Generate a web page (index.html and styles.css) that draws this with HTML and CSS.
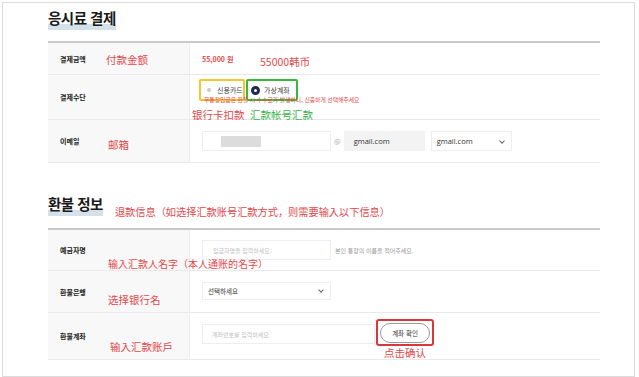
FILE: index.html
```html
<!DOCTYPE html>
<html lang="ko">
<head>
<meta charset="utf-8">
<title>응시료 결제</title>
<link rel="stylesheet" href="styles.css">
</head>
<body>
<div class="frame">
  <div class="title-line t1">
    <h2 class="title"><span class="hl">응시료 결제</span></h2>
  </div>
  <div class="table">
    <div class="row r1">
      <div class="th">결제금액</div>
      <div class="td"><span class="price">55,000 원</span></div>
      <span class="note n-amount">付款金额</span>
      <span class="note n-won">55000韩币</span>
    </div>
    <div class="row r2">
      <div class="th">결제수단</div>
      <div class="td td-pay">
        <div class="opts">
          <span class="opt opt-card"><span class="dot"></span>신용카드</span>
          <span class="opt opt-vbank"><span class="radio"></span>가상계좌</span>
        </div>
        <p class="warn">무통장입금은 환불 시 수수료가 발생하니, 신중하게 선택해주세요</p>
      </div>
      <span class="note n-card">银行卡扣款</span>
      <span class="note green n-vbank">汇款帐号汇款</span>
    </div>
    <div class="row r3">
      <div class="th">이메일</div>
      <div class="td">
        <span class="input in-mail"><span class="blur"></span></span>
        <span class="at">@</span>
        <span class="input in-domain">gmail.com</span>
        <span class="input select sel-domain">gmail.com<span class="chev"></span></span>
      </div>
      <span class="note n-mail">邮箱</span>
    </div>
  </div>

  <div class="title-line t2">
    <h2 class="title"><span class="hl">환불 정보</span></h2>
    <span class="note inline">退款信息（如选择汇款账号汇款方式，则需要输入以下信息）</span>
  </div>
  <div class="table">
    <div class="row s1">
      <div class="th">예금자명</div>
      <div class="td">
        <span class="input in-name ph">입금자명을 입력하세요.</span>
        <span class="help">본인 통장의 이름을 적어주세요.</span>
      </div>
      <span class="note n-name">输入汇款人名字（本人通账的名字）</span>
    </div>
    <div class="row s2">
      <div class="th">환불은행</div>
      <div class="td">
        <span class="input select sel-bank">선택하세요<span class="chev"></span></span>
      </div>
      <span class="note n-bank">选择银行名</span>
    </div>
    <div class="row s3">
      <div class="th">환불계좌</div>
      <div class="td td-acc">
        <span class="input in-acc ph">계좌번호를 입력하세요.</span>
        <div class="confirm">
          <span class="mark"><button class="btn" type="button">계좌 확인</button></span>
          <span class="note static">点击确认</span>
        </div>
      </div>
      <span class="note n-acc">输入汇款账户</span>
    </div>
  </div>
</div>
</body>
</html>
```
FILE: styles.css
```css
html, body {
  margin: 0;
  padding: 0;
  background: #fff;
  overflow: hidden;
}
body {
  font-family: "Noto Sans CJK KR", "Noto Sans", sans-serif;
  color: #222;
}
.frame {
  box-sizing: border-box;
  margin: 2px 4px 0 2px;
  height: 375px;
  border: 1px solid #dcdcdc;
  padding: 5px 0 0 45px;
}
.title-line {
  display: flex;
  align-items: flex-end;
  gap: 12px;
  height: 22px;
}
.t2 {
  margin-top: 31px;
}
.title {
  margin: 0;
  font-size: 14.5px;
  line-height: 20px;
  font-weight: 700;
  letter-spacing: -0.5px;
  color: #1a1a1a;
}
.hl {
  display: inline-block;
  padding-bottom: 2px;
  background: linear-gradient(transparent 72%, #d4e1eb 72%);
}
.table {
  width: 552px;
  margin-top: 11px;
  border-top: 2px solid #c9c9c9;
}
.t2 + .table {
  margin-top: 12px;
}
.row {
  position: relative;
  display: grid;
  grid-template-columns: 142px 1fr;
  border-bottom: 1px solid #e9e9e9;
  box-sizing: border-box;
}
.r1 { height: 32px; }
.r2 { height: 45px; }
.r3 { height: 43px; }
.s1 { height: 41px; }
.s2 { height: 42px; }
.s3 { height: 47px; }
.th {
  background: #f8f8f8;
  border-right: 1px solid #ececec;
  display: flex;
  align-items: center;
  padding-left: 12px;
  font-size: 7px;
  font-weight: 700;
  color: #222;
}
.td {
  display: flex;
  align-items: center;
  padding-left: 12px;
  font-size: 7px;
}
.price {
  color: #e04a4a;
  font-weight: 700;
  font-size: 7px;
}
.note {
  position: absolute;
  font-family: "Noto Sans CJK SC", "Noto Sans CJK KR", sans-serif;
  font-size: 10.5px;
  line-height: 14px;
  color: #e2484b;
  white-space: nowrap;
}
.note.green { color: #3bb54a; }
.note.inline, .note.static {
  position: static;
}
.note.inline {
  margin-bottom: -3px;
  font-size: 10.2px;
}
.n-amount { left: 58px; top: 10px; }
.n-won { left: 212px; top: 12px; }
.n-card { left: 144px; top: 33px; }
.n-vbank { left: 202px; top: 33px; }
.n-mail { left: 60px; top: 18px; }
.n-name { left: 60px; top: 27px; font-size: 10px; }
.n-bank { left: 60px; top: 22px; }
.n-acc { left: 62px; top: 27px; }

/* payment options */
.td-pay {
  flex-direction: column;
  align-items: flex-start;
  justify-content: flex-start;
  padding-top: 4px;
}
.opts {
  display: flex;
  margin-left: -3px;
}
.opt {
  box-sizing: border-box;
  height: 22px;
  display: inline-flex;
  align-items: center;
  font-size: 7px;
  color: #444;
  border-radius: 2px;
}
.opt-card {
  width: 46px;
  border: 2px solid #f7c52a;
  padding-left: 6px;
}
.opt-vbank {
  width: 52px;
  margin-left: 1px;
  border: 2px solid #38b93c;
  padding-left: 3px;
}
.dot {
  width: 4px;
  height: 4px;
  border-radius: 50%;
  background: #c9c9c9;
  margin-right: 6px;
}
.radio {
  box-sizing: border-box;
  width: 9px;
  height: 9px;
  border-radius: 50%;
  border: 3px solid #1d2a4d;
  background: #fff;
  margin-right: 4px;
}
.warn {
  margin: -5px 0 0 2px;
  font-size: 5.8px;
  line-height: 8px;
  color: #e04a4a;
  white-space: nowrap;
}

/* inputs */
.input {
  box-sizing: border-box;
  height: 20px;
  display: inline-flex;
  align-items: center;
  border: 1px solid #eeeeee;
  background: #fff;
  font-size: 7px;
  color: #333;
}
.in-mail {
  width: 129px;
  padding-left: 18px;
}
.blur {
  width: 40px;
  height: 11px;
  background: #dcdcdc;
  filter: blur(0.6px);
}
.at {
  margin: 0 3px 0 3px;
  color: #aaa;
  font-size: 7px;
}
.in-domain {
  width: 81px;
  padding-left: 9px;
  background: #f3f3f3;
  border-color: #f3f3f3;
  font-family: "Open Sans", sans-serif;
  font-size: 7.5px;
}
.select {
  position: relative;
}
.sel-domain {
  width: 81px;
  margin-left: 6px;
  padding-left: 5px;
  font-family: "Open Sans", sans-serif;
  font-size: 7.5px;
}
.chev {
  position: absolute;
  right: 7px;
  top: 7px;
  width: 3px;
  height: 3px;
  border-right: 1px solid #666;
  border-bottom: 1px solid #666;
  transform: rotate(45deg);
}
.ph {
  color: #c2c2c2;
  font-size: 6px;
}
.in-name {
  width: 129px;
  padding-left: 10px;
}
.help {
  margin-left: 4px;
  font-size: 6px;
  color: #999;
}
.sel-bank {
  width: 129px;
  height: 18px;
  padding-left: 5px;
  font-size: 6.5px;
  margin-bottom: 2px;
}
.sel-bank .chev { right: 7px; top: 5px; }
.td-acc {
  align-items: flex-start;
  padding-top: 6px;
}
.in-acc {
  width: 173px;
  padding-left: 9px;
  margin-top: 5px;
}
.confirm {
  display: flex;
  flex-direction: column;
  align-items: center;
  margin-left: 1px;
}
.mark {
  box-sizing: border-box;
  width: 58px;
  height: 27px;
  border: 2px solid #d8383c;
  border-radius: 3px;
  display: flex;
  align-items: center;
  justify-content: center;
}
.btn {
  width: 50px;
  height: 20px;
  border: 1px solid #9a9a9a;
  border-radius: 10px;
  background: #fff;
  font-family: "Noto Sans CJK KR", sans-serif;
  font-size: 6.5px;
  color: #333;
  padding: 0;
}
.note.static {
  margin-top: 1px;
  line-height: 12px;
}
```
